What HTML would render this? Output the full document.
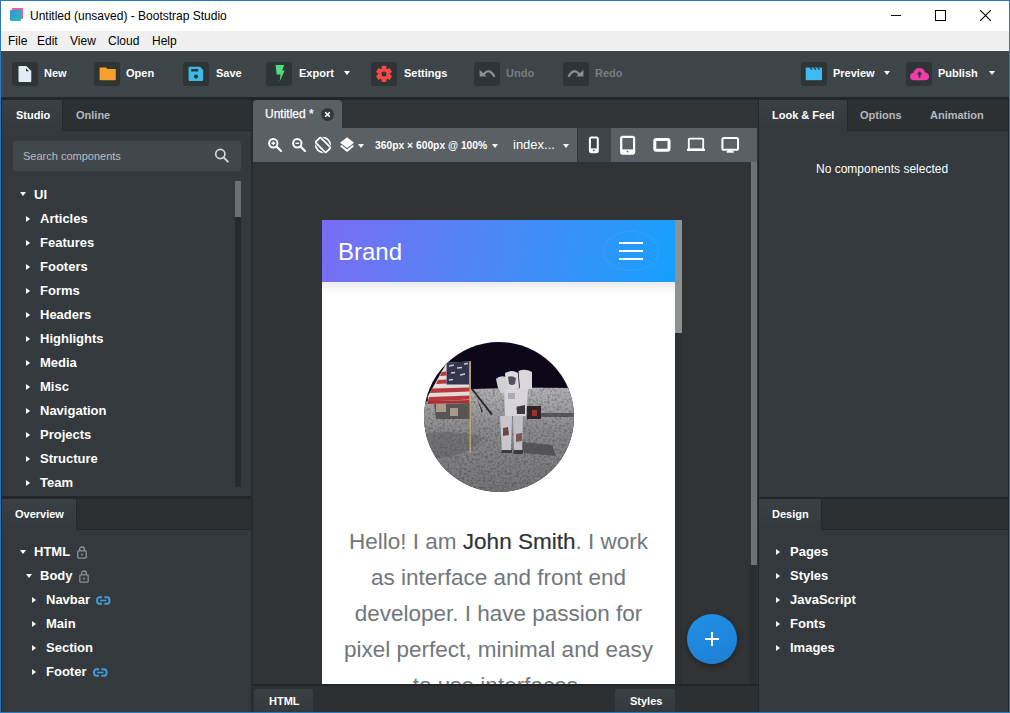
<!DOCTYPE html>
<html><head><meta charset="utf-8">
<style>
*{margin:0;padding:0;box-sizing:border-box}
html,body{width:1010px;height:713px;overflow:hidden;background:#1a80d0}
body{font-family:"Liberation Sans",sans-serif;position:relative}
.a{position:absolute}
#win{position:absolute;left:0;top:0;width:1010px;height:713px;overflow:hidden;background:#23272a}
/* coordinates inside #win are offset by 1px */
#title{left:0;top:0;width:1010px;height:31px;background:#fff}
#title .t{left:30px;top:9px;font-size:12px;color:#000;white-space:nowrap}
#menu{left:0;top:31px;width:1010px;height:20px;background:#f0f0f0;box-shadow:inset 0 -1px 0 #f7f7f7}
#menu span{position:absolute;top:3px;font-size:12px;color:#000}
#tb{left:0;top:51px;width:1010px;height:46px;background:#3e4549}
.ib{position:absolute;top:11px;width:26px;height:24px;background:#2f3437;border-radius:3px}
.ib svg{position:absolute;left:0;top:0}
.bt{position:absolute;top:16px;font-size:11px;font-weight:bold;color:#fff;white-space:nowrap}
.bt.dis{color:#777d82}
.car{position:absolute;width:0;height:0;border-left:3.5px solid transparent;border-right:3.5px solid transparent;border-top:4px solid #fff}
.tabbar{position:absolute;background:#2c3033;box-shadow:inset 0 -1px 0 #24282b}
.tab{position:absolute;top:0;height:31px;font-size:11px;font-weight:bold;color:#fff;white-space:nowrap}
.tab.on{background:linear-gradient(#3b4044,#34393d);box-shadow:1px 0 0 #24282b;z-index:1}
.tab span{position:absolute;top:9px}
.tab.off{color:#b3b9be}
.panel{position:absolute;background:#34393d}
.li{position:absolute;font-size:13px;font-weight:bold;color:#fff;white-space:nowrap}
.tr{position:absolute;width:0;height:0;border-top:3px solid transparent;border-bottom:3px solid transparent;border-left:4px solid #fff}
.td{position:absolute;width:0;height:0;border-left:3px solid transparent;border-right:3px solid transparent;border-top:4px solid #fff}
</style></head><body>
<div id="win">
 <!-- TITLE BAR -->
 <div id="title" class="a">
  <svg class="a" style="left:10px;top:8px" width="14" height="14" viewBox="0 0 14 14"><defs><linearGradient id="g1" x1="0" y1="0" x2="1" y2="1"><stop offset="0" stop-color="#3a8ee0"/><stop offset="1" stop-color="#2cc0b0"/></linearGradient></defs><rect x="2" y="0" width="11" height="11" rx="1" fill="#ee5c9a"/><rect x="0" y="2" width="11" height="11" rx="1" fill="url(#g1)"/></svg>
  <div class="a t">Untitled (unsaved) - Bootstrap Studio</div>
  <div class="a" style="left:891px;top:15px;width:10px;height:1px;background:#000"></div>
  <div class="a" style="left:935px;top:10px;width:11px;height:11px;border:1px solid #000"></div>
  <svg class="a" style="left:980px;top:10px" width="11" height="11" viewBox="0 0 11 11"><path d="M0 0L11 11M11 0L0 11" stroke="#000" stroke-width="1.1"/></svg>
 </div>
 <!-- MENU -->
 <div id="menu" class="a">
  <span style="left:8px">File</span><span style="left:37px">Edit</span><span style="left:70px">View</span><span style="left:108px">Cloud</span><span style="left:152px">Help</span>
 </div>
 <!-- TOOLBAR -->
 <div id="tb" class="a">
  <div class="ib" style="left:12px"><svg width="26" height="24" viewBox="0 0 26 24"><path d="M7.2 4H14.3L19.3 9V19.3Q19.3 20 18.6 20H7.2Q6.5 20 6.5 19.3V4.7Q6.5 4 7.2 4Z" fill="#e3ebf4"/><path d="M14 6.2V9.2H17Z" fill="#2f3437"/></svg></div><div class="bt" style="left:44px">New</div>
  <div class="ib" style="left:94px"><svg width="26" height="24" viewBox="0 0 26 24"><path d="M6.3 5.6H12.2L13.4 7H21.1Q21.8 7 21.8 7.7V17.5Q21.8 18.2 21.1 18.2H6.3Q5.6 18.2 5.6 17.5V6.3Q5.6 5.6 6.3 5.6Z" fill="#f6a12c"/></svg></div><div class="bt" style="left:126px">Open</div>
  <div class="ib" style="left:183px"><svg width="26" height="24" viewBox="0 0 26 24"><path d="M6.4 4.7H17L20.2 7.9V18.1Q20.2 18.9 19.4 18.9H6.4Q5.6 18.9 5.6 18.1V5.5Q5.6 4.7 6.4 4.7Z" fill="#3cbbe6"/><rect x="8.2" y="7" width="7" height="2.5" fill="#2f3437"/><circle cx="13" cy="14.6" r="2.1" fill="#2f3437"/></svg></div><div class="bt" style="left:216px">Save</div>
  <div class="ib" style="left:266px"><svg width="26" height="24" viewBox="0 0 26 24"><path d="M9.6 3H18.2L16.2 8.6H18.7L13.6 19.4L14.6 12.4H10.6Z" fill="#4fdc7c"/></svg></div><div class="bt" style="left:299px">Export</div><div class="car" style="left:344px;top:20px"></div>
  <div class="ib" style="left:371px"><svg width="26" height="24" viewBox="0 0 26 24"><path fill-rule="evenodd" fill="#f94848" d="M10.55 6.52 L10.73 4.12 L15.27 4.12 L15.45 6.52 L16.52 7.14 L18.69 6.10 L20.96 10.02 L18.97 11.38 L18.97 12.62 L20.96 13.98 L18.69 17.90 L16.52 16.86 L15.45 17.48 L15.27 19.88 L10.73 19.88 L10.55 17.48 L9.48 16.86 L7.31 17.90 L5.04 13.98 L7.03 12.62 L7.03 11.38 L5.04 10.02 L7.31 6.10 L9.48 7.14Z M13 9.5A2.5 2.5 0 1 0 13 14.5A2.5 2.5 0 1 0 13 9.5Z"/></svg></div><div class="bt" style="left:404px">Settings</div>
  <div class="ib" style="left:474px"><svg width="26" height="24" viewBox="0 0 26 24"><path d="M9.5 12.6Q15 5 20.6 14.8" stroke="#8a9094" stroke-width="2.1" fill="none"/><path d="M5.6 7.8V14.6H12.6Z" fill="#8a9094"/></svg></div><div class="bt dis" style="left:506px">Undo</div>
  <div class="ib" style="left:563px"><svg width="26" height="24" viewBox="0 0 26 24"><path d="M16.5 12.6Q11 5 5.4 14.8" stroke="#8a9094" stroke-width="2.1" fill="none"/><path d="M20.4 7.8V14.6H13.4Z" fill="#8a9094"/></svg></div><div class="bt dis" style="left:595px">Redo</div>
  <div class="ib" style="left:801px"><svg width="26" height="24" viewBox="0 0 26 24"><path d="M4.7 5.6H21V18.2H4.7Z" fill="#3cbcf2"/><path d="M8.6 5.6H10.2L11.6 7.8H10Z M12.4 5.6H14L15.4 7.8H13.8Z M16.2 5.6H17.8L19.2 7.8H17.6Z" fill="#2f3437"/></svg></div><div class="bt" style="left:833px">Preview</div><div class="car" style="left:884px;top:20px"></div>
  <div class="ib" style="left:906px"><svg width="26" height="24" viewBox="0 0 26 24"><path d="M8 18.2Q4 18.2 4 14.6Q4 11.4 7.4 11Q8.6 5.9 13.6 5.9Q18.2 5.9 19 10.4Q23 11 23 14.4Q23 18.2 19 18.2Z" fill="#f23ca8"/><path d="M13.5 9.2L16.3 12.4H14.5V15.6H12.5V12.4H10.7Z" fill="#2f3437"/></svg></div><div class="bt" style="left:938px">Publish</div><div class="car" style="left:989px;top:20px"></div>
 </div>

 <!-- LEFT PANEL (win coords: x-1, y-1) -->
 <div class="tabbar" style="left:2px;top:100px;width:249px;height:31px">
  <div class="tab on" style="left:0;width:60px"><span style="left:14px">Studio</span></div>
  <div class="tab off" style="left:60px;width:60px"><span style="left:14px">Online</span></div>
 </div>
 <div class="panel" style="left:2px;top:131px;width:249px;height:365px"></div>
 <div class="a" style="left:13px;top:141px;width:228px;height:30px;background:#42474b;border-radius:3px"></div>
 <div class="a" style="left:23px;top:150px;font-size:11px;color:#b9bec2">Search components</div>

 <div class="tabbar" style="left:2px;top:499px;width:249px;height:31px">
  <div class="tab on" style="left:0;width:74px"><span style="left:13px">Overview</span></div>
 </div>
 <div class="panel" style="left:2px;top:530px;width:249px;height:183px"></div>


 <svg class="a" style="left:212px;top:146px" width="20" height="20" viewBox="0 0 20 20"><circle cx="8.3" cy="8" r="4.6" stroke="#d3d7da" stroke-width="1.7" fill="none"/><path d="M11.6 11.4L15.8 15.6" stroke="#d3d7da" stroke-width="2" stroke-linecap="round"/></svg>
 <div class="a" style="left:235px;top:181px;width:6px;height:36px;background:#6b7073"></div>
 <div class="a" style="left:235px;top:217px;width:6px;height:270px;background:#272b2d"></div>
 <div class="a" style="left:251px;top:100px;width:2px;height:612px;background:#272b2e"></div>
 <svg class="a" style="left:77px;top:546px" width="10" height="13" viewBox="0 0 10 13"><path d="M2.6 5V3.4Q2.6 1 5 1Q7.4 1 7.4 3.4V5" stroke="#8e9397" stroke-width="1.3" fill="none"/><rect x="0.8" y="4.9" width="8.4" height="7.2" rx="0.8" stroke="#8e9397" stroke-width="1.3" fill="none"/><circle cx="5" cy="8.5" r="1" fill="#8e9397"/></svg>
 <svg class="a" style="left:79px;top:570px" width="10" height="13" viewBox="0 0 10 13"><path d="M2.6 5V3.4Q2.6 1 5 1Q7.4 1 7.4 3.4V5" stroke="#8e9397" stroke-width="1.3" fill="none"/><rect x="0.8" y="4.9" width="8.4" height="7.2" rx="0.8" stroke="#8e9397" stroke-width="1.3" fill="none"/><circle cx="5" cy="8.5" r="1" fill="#8e9397"/></svg>
 <svg class="a" style="left:96px;top:596px" width="15" height="9" viewBox="0 0 15 9"><path d="M6 1.2H3.6Q1 1.2 1 4.5Q1 7.8 3.6 7.8H6M8.4 1.2H11Q13.6 1.2 13.6 4.5Q13.6 7.8 11 7.8H8.4" stroke="#3e9fdc" stroke-width="1.9" fill="none"/><path d="M4.2 4.5H10.4" stroke="#3e9fdc" stroke-width="1.6"/></svg>
 <svg class="a" style="left:93px;top:668px" width="15" height="9" viewBox="0 0 15 9"><path d="M6 1.2H3.6Q1 1.2 1 4.5Q1 7.8 3.6 7.8H6M8.4 1.2H11Q13.6 1.2 13.6 4.5Q13.6 7.8 11 7.8H8.4" stroke="#3e9fdc" stroke-width="1.9" fill="none"/><path d="M4.2 4.5H10.4" stroke="#3e9fdc" stroke-width="1.6"/></svg>
 <!-- CENTER -->
 <div class="a" style="left:253px;top:100px;width:505px;height:584px;background:#303437"></div>
 <div class="a" style="left:253px;top:100px;width:89px;height:30px;background:#5a6064;border-radius:4px 4px 0 0"></div>
 <div class="a" style="left:253px;top:128px;width:324px;height:34px;background:#5a6064"></div>
 <div class="a" style="left:578px;top:128px;width:179px;height:34px;background:#5a6064"></div>
 <div class="a" style="left:578px;top:128px;width:33px;height:34px;background:#3f4549"></div>


 <!-- canvas tab + toolbar content -->
 <div class="a" style="left:265px;top:107px;font-size:12px;color:#fff;white-space:nowrap;-webkit-text-stroke:0.25px #fff">Untitled *</div>
 <div class="a" style="left:321px;top:108px;width:13px;height:13px;border-radius:50%;background:#32373a"></div>
 <svg class="a" style="left:321px;top:108px" width="13" height="13" viewBox="0 0 13 13"><path d="M4.2 4.2L8.8 8.8M8.8 4.2L4.2 8.8" stroke="#fff" stroke-width="1.6"/></svg>
 <svg class="a" style="left:266px;top:136px" width="18" height="18" viewBox="0 0 18 18"><circle cx="7.3" cy="7.3" r="4.2" stroke="#fff" stroke-width="2" fill="none"/><path d="M10.8 10.8L15 15" stroke="#fff" stroke-width="2.2" stroke-linecap="round"/><path d="M7.3 5.5V9.1M5.5 7.3H9.1" stroke="#fff" stroke-width="1.4"/></svg>
 <svg class="a" style="left:290px;top:136px" width="18" height="18" viewBox="0 0 18 18"><circle cx="7.3" cy="7.3" r="4.2" stroke="#fff" stroke-width="2" fill="none"/><path d="M10.8 10.8L15 15" stroke="#fff" stroke-width="2.2" stroke-linecap="round"/><path d="M5.5 7.3H9.1" stroke="#fff" stroke-width="1.4"/></svg>
 <svg class="a" style="left:314px;top:136px" width="18" height="18" viewBox="0 0 18 18"><circle cx="9" cy="9" r="7.3" stroke="#fff" stroke-width="1.7" fill="none"/><g transform="rotate(-45 9 9)"><rect x="5.4" y="1.2" width="7.2" height="15.6" rx="1.2" stroke="#5a6064" stroke-width="3.4" fill="none"/><rect x="5.4" y="1.6" width="7.2" height="14.8" rx="1.2" stroke="#fff" stroke-width="1.7" fill="none"/></g></svg>
 <svg class="a" style="left:339px;top:137px" width="16" height="16" viewBox="0 0 16 16"><path d="M8.1 0.3L15 5.7L8.1 11L1 5.7Z" fill="#fff"/><path d="M1 9.3L8.1 15L15 9.3L13.4 8.1L8.1 12.4L2.6 8.1Z" fill="#fff"/></svg>
 <div class="car" style="left:358px;top:144px"></div>
 <div class="a" style="left:375px;top:140px;font-size:10.3px;font-weight:bold;color:#fff;white-space:nowrap">360px × 600px @ 100%</div>
 <div class="car" style="left:492px;top:144px"></div>
 <div class="a" style="left:513px;top:137px;font-size:13px;color:#fff;white-space:nowrap">index...</div>
 <div class="car" style="left:563px;top:144px"></div>
 <!-- device icons -->
 <svg class="a" style="left:588px;top:136px" width="12" height="18" viewBox="0 0 12 18"><rect x="1.9" y="1.6" width="7.9" height="14.6" rx="1.5" stroke="#fff" stroke-width="2" fill="none"/><rect x="2.4" y="12.4" width="7" height="3.4" fill="#fff"/><circle cx="5.85" cy="14.3" r="0.85" fill="#3f4549"/></svg>
 <svg class="a" style="left:620px;top:135px" width="16" height="20" viewBox="0 0 16 20"><rect x="1.2" y="1.8" width="12.9" height="16.8" rx="1.6" stroke="#fff" stroke-width="2.2" fill="none"/><rect x="1.5" y="14.4" width="12" height="3.6" fill="#fff"/><circle cx="7.6" cy="16.6" r="0.9" fill="#5a6064"/></svg>
 <svg class="a" style="left:653px;top:138px" width="18" height="14" viewBox="0 0 18 14"><rect x="1.8" y="1.6" width="14.2" height="10.6" rx="1.4" stroke="#fff" stroke-width="3" fill="none"/></svg>
 <svg class="a" style="left:686px;top:137px" width="20" height="15" viewBox="0 0 20 15"><rect x="2.8" y="1.6" width="14.4" height="10.8" rx="1" stroke="#fff" stroke-width="1.8" fill="none"/><path d="M1 11.8H19V13.2Q19 14 18.2 14H1.8Q1 14 1 13.2Z" fill="#fff"/></svg>
 <svg class="a" style="left:721px;top:136px" width="18" height="18" viewBox="0 0 18 18"><rect x="1.4" y="2" width="15.6" height="11.8" rx="1.6" stroke="#fff" stroke-width="2" fill="none"/><rect x="7.7" y="13.5" width="3" height="2" fill="#fff"/><rect x="5.7" y="15" width="7" height="1.8" rx="0.6" fill="#fff"/></svg>
 <!-- canvas scrollbar -->
 <div class="a" style="left:751px;top:162px;width:6px;height:403px;background:#6d7276"></div>
 <div class="a" style="left:749px;top:565px;width:8px;height:119px;background:#2a2e30"></div>
 <!-- PAGE FRAME -->
 <div class="a" style="left:322px;top:220px;width:360px;height:464px;overflow:hidden;background:#2c3033">
  <div class="a" style="left:0;top:0;width:353px;height:464px;background:#fff"></div>
  <div class="a" style="left:0;top:62px;width:353px;height:12px;background:linear-gradient(rgba(0,0,0,0.08),rgba(0,0,0,0))"></div>
  <div class="a" style="left:0;top:0;width:353px;height:62px;background:linear-gradient(100deg,#7a6df4 0%,#4f86f4 45%,#17a0fe 100%)"></div>
  <div class="a" style="left:16px;top:18px;font-size:24px;color:#fff;white-space:nowrap">Brand</div>
  <div class="a" style="left:281px;top:11px;width:56px;height:40px;border:1px solid rgba(255,255,255,0.07);border-radius:50%"></div>
  <div class="a" style="left:297px;top:22px;width:24px;height:2px;background:#fff"></div>
  <div class="a" style="left:297px;top:30px;width:24px;height:2px;background:#fff"></div>
  <div class="a" style="left:297px;top:38px;width:24px;height:2px;background:#fff"></div>
  <div class="a" style="left:353px;top:0;width:7px;height:113px;background:#8c9194"></div>
  <div class="a" style="left:0;top:304px;width:353px;text-align:center;font-size:22.5px;line-height:36px;color:#72777b">Hello! I am <span style="color:#2f3338;-webkit-text-stroke:0.2px #2f3338">John Smith</span>. I work<br>as interface and front end<br>developer. I have passion for<br>pixel perfect, minimal and easy<br>to use interfaces.</div>
 </div>

 <svg class="a" style="left:424px;top:342px" width="150" height="150" viewBox="0 0 150 150">
  <defs>
   <clipPath id="cc"><circle cx="75" cy="75" r="75"/></clipPath>
   <linearGradient id="gnd" x1="0" y1="0" x2="0" y2="1"><stop offset="0" stop-color="#b2b1b4"/><stop offset="0.2" stop-color="#a09fa2"/><stop offset="0.4" stop-color="#8a898c"/><stop offset="1" stop-color="#747377"/></linearGradient>
   <filter id="tex" x="0" y="0" width="100%" height="100%"><feTurbulence type="fractalNoise" baseFrequency="0.42" numOctaves="2" seed="7"/><feColorMatrix values="0 0 0 0 0  0 0 0 0 0  0 0 0 0 0  0 0 0 -2.2 1.25"/></filter>
   <filter id="tex2" x="0" y="0" width="100%" height="100%"><feTurbulence type="fractalNoise" baseFrequency="0.5" numOctaves="1" seed="11"/><feColorMatrix values="0 0 0 0 1  0 0 0 0 1  0 0 0 0 1  0 0 0 2.4 -1.45"/></filter>
  </defs>
  <g clip-path="url(#cc)">
   <rect width="150" height="150" fill="#0e0719"/>
   <path d="M0 60L48 47L100 45.5L150 46V150H0Z" fill="url(#gnd)"/>
   <rect y="45" width="150" height="105" fill="#000" filter="url(#tex)" opacity="0.3"/>
   <rect y="45" width="150" height="105" fill="#fff" filter="url(#tex2)" opacity="0.2"/>
   <path d="M0 92Q30 86 60 96Q40 118 0 116Z" fill="#4d4c50" opacity="0.35"/>
   <path d="M112 71H150V75H110Z" fill="#2e2d31" opacity="0.6"/>
   <path d="M97 100L128 103L132 114L100 111Z" fill="#38383c" opacity="0.6"/>
   <path d="M10 60H47V77H12Z" fill="#4a4540" opacity="0.8"/>
   <path d="M12 62H22V70H12Z M26 66H34V74H26Z" fill="#d8cfb0" opacity="0.6"/>
   <path d="M48 45.4L68.7 71.9L67 73L47 47Z M53 56L59 70H57.5Z" fill="#26262a"/>
   <path d="M3.9 62L3.9 54.2L22.6 20.8L45.6 19.4V61Z" fill="#e2dcdc"/>
   <path d="M8 46.5L45.6 45.5V49.5L6 51Z M5 55L45.6 53.5V57.5L4 59.5Z M14 38L22.6 37.5V41.5L12 42Z M18 30L22.6 29.5V33.5L16 34Z" fill="#b8383c"/>
   <path d="M3.9 59L45.6 58V61L3.9 62Z" fill="#a83034"/>
   <path d="M22.6 20.8L45 19.5V42.4H22.6Z" fill="#34354f"/>
   <path d="M25 24L30 23M33 26L38 25.5M27 31L31 30.5M36 33L41 32M40 22L44 21.5M25 38L29 37.5" stroke="#c8cad8" stroke-width="1.4"/>
   <rect x="45.6" y="19" width="1.3" height="92" fill="#c4ac7c"/>
   <path d="M103 64H117V77H103Z" fill="#2c2626"/>
   <path d="M108 68H113V74H108Z" fill="#a03030"/>
   <path d="M94.5 29Q101 26 108 30L108 47L96 48Z" fill="#d8d8dc"/>
   <path d="M81 31Q88 27 94 31L95 46Q88 49 82 46Z" fill="#dcdae0"/>
   <path d="M84 35Q88 33 92 36L91 42Q88 44 85 42Z" fill="#55505a"/>
   <path d="M72 37Q76 33 82 35L84 47L78 52L74 46Z" fill="#cfcfd4"/>
   <path d="M80 47H104L102 74H81Z" fill="#d6d4d9"/>
   <path d="M84 51H91V57H84Z" fill="#aaaab2"/>
   <path d="M92.5 64.7L101 63L101 72L93 72Z" fill="#3a3a40"/>
   <path d="M76 74H88L87 108L78 110Z" fill="#c8c6cc"/>
   <path d="M89 74H99L98 110H90Z" fill="#c2c0c6"/>
   <path d="M79 86L84 85L85 93L79 94Z" fill="#6a4a40"/>
   <path d="M92 92L98 91V99L92 100Z" fill="#7a5a50"/>
   <path d="M78 108H88V111H77Z M90 108H99V112H89Z" fill="#3c3a40"/>
  </g>
 </svg>
 <!-- FAB -->
 <div class="a" style="left:687px;top:614px;width:50px;height:50px;border-radius:50%;background:linear-gradient(160deg,#1e90e6,#1f7fd4);box-shadow:0 2px 6px rgba(0,0,0,0.35)"></div>
 <div class="a" style="left:705px;top:638px;width:14px;height:2px;background:#fff"></div>
 <div class="a" style="left:711px;top:632px;width:2px;height:14px;background:#fff"></div>
 <!-- RIGHT PANEL -->
 <div class="tabbar" style="left:759px;top:100px;width:249px;height:31px">
  <div class="tab on" style="left:0;width:88px"><span style="left:13px">Look &amp; Feel</span></div>
  <div class="tab off" style="left:88px;width:70px"><span style="left:13px">Options</span></div>
  <div class="tab off" style="left:158px;width:90px"><span style="left:13px">Animation</span></div>
 </div>
 <div class="panel" style="left:759px;top:131px;width:249px;height:366px"></div>
 <div class="a" style="left:816px;top:162px;font-size:12px;color:#fff">No components selected</div>
 <div class="tabbar" style="left:759px;top:499px;width:249px;height:31px">
  <div class="tab on" style="left:0;width:62px"><span style="left:13px">Design</span></div>
 </div>
 <div class="panel" style="left:759px;top:530px;width:249px;height:183px"></div>

 <div class="a" style="left:20px;top:192px" ><div class="td" style="position:static"></div></div>
 <div class="li" style="left:34px;top:187px">UI</div>
 <div class="tr" style="left:26px;top:216px"></div><div class="li" style="left:40px;top:211px">Articles</div>
 <div class="tr" style="left:26px;top:240px"></div><div class="li" style="left:40px;top:235px">Features</div>
 <div class="tr" style="left:26px;top:264px"></div><div class="li" style="left:40px;top:259px">Footers</div>
 <div class="tr" style="left:26px;top:288px"></div><div class="li" style="left:40px;top:283px">Forms</div>
 <div class="tr" style="left:26px;top:312px"></div><div class="li" style="left:40px;top:307px">Headers</div>
 <div class="tr" style="left:26px;top:336px"></div><div class="li" style="left:40px;top:331px">Highlights</div>
 <div class="tr" style="left:26px;top:360px"></div><div class="li" style="left:40px;top:355px">Media</div>
 <div class="tr" style="left:26px;top:384px"></div><div class="li" style="left:40px;top:379px">Misc</div>
 <div class="tr" style="left:26px;top:408px"></div><div class="li" style="left:40px;top:403px">Navigation</div>
 <div class="tr" style="left:26px;top:432px"></div><div class="li" style="left:40px;top:427px">Projects</div>
 <div class="tr" style="left:26px;top:456px"></div><div class="li" style="left:40px;top:451px">Structure</div>
 <div class="tr" style="left:26px;top:480px"></div><div class="li" style="left:40px;top:475px">Team</div>
 <div class="td" style="left:20px;top:550px;border-left-width:3px;border-right-width:3px"></div><div class="li" style="left:34px;top:544px">HTML</div>
 <div class="td" style="left:26px;top:574px;border-left-width:3px;border-right-width:3px"></div><div class="li" style="left:40px;top:568px">Body</div>
 <div class="tr" style="left:32px;top:597px"></div><div class="li" style="left:46px;top:592px">Navbar</div>
 <div class="tr" style="left:32px;top:621px"></div><div class="li" style="left:46px;top:616px">Main</div>
 <div class="tr" style="left:32px;top:645px"></div><div class="li" style="left:46px;top:640px">Section</div>
 <div class="tr" style="left:32px;top:669px"></div><div class="li" style="left:46px;top:664px">Footer</div>
 <div class="tr" style="left:776px;top:549px"></div><div class="li" style="left:790px;top:544px">Pages</div>
 <div class="tr" style="left:776px;top:573px"></div><div class="li" style="left:790px;top:568px">Styles</div>
 <div class="tr" style="left:776px;top:597px"></div><div class="li" style="left:790px;top:592px">JavaScript</div>
 <div class="tr" style="left:776px;top:621px"></div><div class="li" style="left:790px;top:616px">Fonts</div>
 <div class="tr" style="left:776px;top:645px"></div><div class="li" style="left:790px;top:640px">Images</div>
 <!-- BOTTOM BAR -->
 <div class="a" style="left:252px;top:684px;width:506px;height:28px;background:#2d3033"></div>

 <div class="a" style="left:252px;top:684px;width:506px;height:2px;background:#232629"></div>
 <div class="a" style="left:254px;top:689px;width:59px;height:23px;background:linear-gradient(#3b4044,#34393c);border-radius:2px 2px 0 0"></div>
 <div class="a" style="left:269px;top:695px;font-size:11px;font-weight:bold;color:#fff">HTML</div>
 <div class="a" style="left:615px;top:689px;width:60px;height:23px;background:linear-gradient(#3b4044,#34393c);border-radius:2px 2px 0 0"></div>
 <div class="a" style="left:630px;top:695px;font-size:11px;font-weight:bold;color:#fff">Styles</div>
</div>
<div class="a" style="left:0;top:0;width:1010px;height:713px;border:1px solid #2f78b6;pointer-events:none"></div>
</body></html>
